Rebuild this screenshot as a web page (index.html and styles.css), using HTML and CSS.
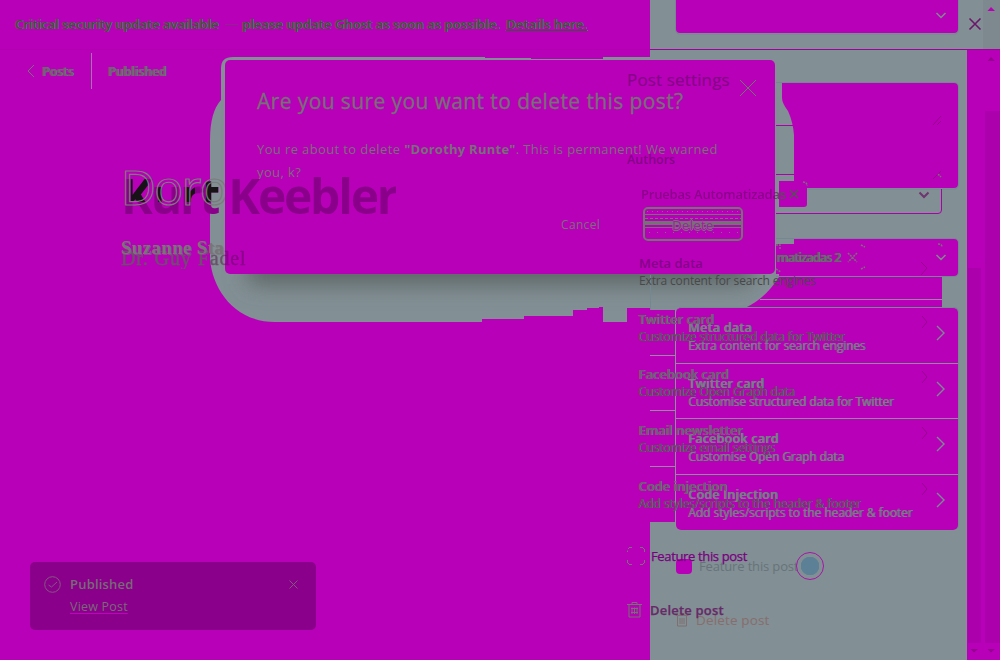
FILE: index.html
```html
<!DOCTYPE html>
<html lang="en">
<head>
<meta charset="utf-8">
<title>Post editor comparison</title>
<link rel="stylesheet" href="styles.css">
</head>
<body>
<main class="stage">
  <svg class="backdrop" viewBox="0 0 1000 660" aria-hidden="true">
    <defs>
      <clipPath id="halo"><path d="M221 68Q221 57 233 57H485V58H531V59H603V57H790V110Q794 120 794 150V240Q790 285 745 308H675V310H650V308H627V322H603V307H599V308H587V310H573V316H524V319H482V322H275C232 322 210 285 210 255V140Q210 112 221 100Z"/></clipPath>
      <filter id="soft" x="-20%" y="-20%" width="140%" height="140%"><feGaussianBlur stdDeviation="11"/></filter>
    </defs>
    <path class="faint" d="M0 49.500H650"/>
    <path class="gray" d="M650 0H1000V50H967V660H650Z"/>
    <path class="groove" d="M983 0H1000V49H983Z"/>
    <g clip-path="url(#halo)">
      <path class="gray" d="M200 50H800V330H200Z"/>
      <rect class="shadow" x="248" y="96" width="504" height="188" filter="url(#soft)"/>
    </g>
    <path class="line-dark" d="M650 49.500H1000"/>
    <path class="edge" d="M675.500 0V29Q675.500 34 680 34H954Q958.500 34 958.500 29V0M776 82.500H954Q958.500 82.500 958.500 87V184Q958.500 189 954 189H807M776 238.500H954Q958.500 238.500 958.500 243V272Q958.500 276.500 954 276.500H776M650.500 275V310"/>
    <path class="mag" d="M676 0H958V29Q958 33 954 33H680Q676 33 676 29Z"/>
    <path class="mag" d="M782 83H954Q958 83 958 87V184Q958 188 954 188H807V204Q807 207 804 207H779V181H794V135Q793 122 788 111Q782 103 782 98Z"/>
    <path class="mag" d="M794 239H954Q958 239 958 243V272Q958 276 954 276H779V274H776V244H794Z"/>
    <path class="mag" d="M779 277H942V308H745Q765 299 779 277Z"/>
    <path class="mag" d="M650 310H675V522H650Z"/>
    <path class="hair" d="M760 299.500H942M650 355.500H675M650 410.500H675M650 466.500H675"/>
    <path class="outline" d="M776 125.500H793M776 174.500H794M776 213.500H938Q941.500 213.500 941.500 210V189"/>
    <path class="mag" d="M967 50H1000V660H967Z"/>
    <path class="thumb" d="M985 111H1000V643H985ZM968 268H981V643H968Z"/>
    <path class="mag" d="M987.500 11 991 7 995 11Z"/>
    <path class="deep" d="M987.500 61 991 57 995 61ZM970.500 649H978L974 652.500ZM987.500 649H995L991 652.500Z"/>
    <path class="stroke" d="M936.500 13 941 17.500 945.500 13M936.500 255 941 259.500 945.500 255"/>
    <path class="stroke dark" d="M919.500 192.500 924 197 928.500 192.500"/>
    <path class="stroke purple" d="M969.500 18.500 980.500 29.500M980.500 18.500 969.500 29.500"/>
    <path class="stroke small" d="M790 190 798 198M798 190 790 198"/>
    <path class="stroke dots" d="M848 253 857 262M857 253 848 262"/>
    <path class="trace" d="M933 125 941 116M937 125 941 121M933 179 941 171"/>
    <path class="trace" d="M921 262 927 268 921 275"/>
    <path class="stroke dots" d="M803 182Q807 182 807 186M938 174 941 177M938 244Q942 244 942 247M861 245 865 247M861 269 865 267M776 245H780V249M776 269 781 272"/>
  </svg>

  <section class="layer chrome">
    <div class="notice"><span class="double w1">Critical security update available</span><i class="dash"></i><span class="double w2">please update Ghost as soon as possible.</span><a class="double w3">Details here.</a></div>
    <nav class="crumbs">
      <svg width="9" height="14" viewBox="0 0 9 14"><path d="M8 1 2 7 8 13"/></svg>
      <span class="double posts">Posts</span><i class="rule"></i><span class="double pub">Published</span>
    </nav>
  </section>

  <section class="layer card-layer">
    <div class="card">
      <div class="row"><div><b class="ghost">Meta data</b><p class="ghost">Extra content for search engines</p></div><svg viewBox="0 0 9 16"><path d="M1 1 8 8 1 15"/></svg></div>
      <div class="row"><div><b class="ghost">Twitter card</b><p class="ghost">Customise structured data for Twitter</p></div><svg viewBox="0 0 9 16"><path d="M1 1 8 8 1 15"/></svg></div>
      <div class="row"><div><b class="ghost">Facebook card</b><p class="ghost">Customise Open Graph data</p></div><svg viewBox="0 0 9 16"><path d="M1 1 8 8 1 15"/></svg></div>
      <div class="row"><div><b class="ghost">Code Injection</b><p class="ghost">Add styles/scripts to the header &amp; footer</p></div><svg viewBox="0 0 9 16"><path d="M1 1 8 8 1 15"/></svg></div>
    </div>
    <div class="feature"><i class="box"></i><span>Feature this post</span><i class="knob"></i></div>
    <div class="remove"><svg width="12" height="14" viewBox="0 0 12 14"><path d="M0 2.500H12M4 2V.5H8V2M1.500 3V13H10.500V3M4 5V11M6 5V11M8 5V11"/></svg><span>Delete post</span></div>
  </section>

  <div class="layer author-two"><span class="double">matizadas 2</span></div>

  <section class="layer modal-layer">
    <div class="modal">
      <h2>Are you sure you want to delete this post?</h2>
      <p>You re about to delete <b>"Dorothy Runte"</b>. This is permanent! We warned<br>you, k?</p>
      <div class="actions"><span class="cancel">Cancel</span><span class="delete"><span>Delete</span></span></div>
      <svg class="close" viewBox="0 0 18 18"><path d="M1 1 17 17M17 1 1 17"/></svg>
    </div>
  </section>

  <section class="layer title-layer">
    <div class="titles"><span class="kurt">Kurt Keebler</span></div>
    <div class="byline"><span class="guy">Dr. Guy Fadel</span></div>
  </section>
  <section class="layer title-layer left-only">
    <div class="outlined">Doro</div>
    <div class="suzanne">Suzanne Sta</div>
  </section>

  <section class="layer settings">
    <h3>Post settings</h3>
    <div class="label">Authors</div>
    <div class="token"><span>Pruebas Automatizadas</span></div>
    <div class="item first"><b>Meta data</b><p>Extra content for search engines</p></div>
    <div class="item"><b class="double">Twitter card</b><p class="double s1">Customize structured data for Twitter</p><svg viewBox="0 0 7 14"><path d="M1 1 6 7 1 13"/></svg></div>
    <div class="item"><b class="double">Facebook card</b><p class="double s2">Customize Open Graph data</p><svg viewBox="0 0 7 14"><path d="M1 1 6 7 1 13"/></svg></div>
    <div class="item"><b class="double">Email newsletter</b><p class="double s3">Customize email settings</p><svg viewBox="0 0 7 14"><path d="M1 1 6 7 1 13"/></svg></div>
    <div class="item"><b class="double">Code injection</b><p class="double s4">Add styles/scripts to the header &amp; footer</p><svg viewBox="0 0 7 14"><path d="M1 1 6 7 1 13"/></svg></div>
    <div class="option"><svg width="18" height="18" viewBox="0 0 18 18"><path d="M.5 5V3.500M2 .5H5M13 .5H16M17.500 2V5M17.500 13V16M16 17.500H13M5 17.500H2M.5 16V13M1 2 2 1M16 1 17 2M17 16 16 17M2 17 1 16"/></svg><span class="feat">Feature this post</span></div>
    <div class="option del"><svg width="15" height="16" viewBox="0 0 15 16"><path d="M0 2.500H15M5 2V.5H10V2M2 3V15H13V3M5 5.500V12M7.500 5.500V12M10 5.500V12M4 6.500H11M4 10.500H11"/></svg><span>Delete post</span></div>
  </section>

  <section class="layer toast-layer">
    <div class="toast">
      <svg width="17" height="17" viewBox="0 0 17 17"><circle cx="8.500" cy="8.500" r="7.800"/><path d="M4.500 9 7.500 11 13 6"/></svg>
      <div><div class="state">Published</div><a class="view">View Post</a></div>
      <svg width="9" height="9" viewBox="0 0 9 9"><path d="M.5.5 8.500 8.500M8.500.5.5 8.500"/></svg>
    </div>
  </section>
</main>
</body>
</html>
```
FILE: styles.css
```css
* { box-sizing: border-box; }
body { margin: 0; }
h2, h3, p { margin: 0; font-weight: 400; }
.stage { position: relative; width: 1000px; height: 660px; overflow: hidden; background: #b900b9; font-family: "Open Sans", "Noto Sans", sans-serif; }
.backdrop, .layer { position: absolute; inset: 0; width: 1000px; height: 660px; }
.layer { white-space: nowrap; }
svg { display: block; flex: none; fill: none; stroke: #737373; }
.backdrop { stroke: none; }
.gray { fill: #828f94; }
.groove { fill: #7d898e; }
.shadow { fill: #5b6565; }
.mag { fill: #b900b9; }
.thumb { fill: #ac00ac; }
.deep { fill: #94008f; }
.line-dark { stroke: #a0009e; stroke-width: 1; }
.faint { stroke: #b100b1; }
.edge { stroke: #748891; }
.hair { stroke: #a083a8; }
.outline { stroke: #ab00aa; }
.stroke { stroke: #7d8b8d; stroke-width: 1.5; }
.stroke.dark { stroke: #6f356f; stroke-width: 2; }
.stroke.purple { stroke: #6b186b; stroke-width: 1.6; }
.stroke.small { stroke: #56505a; }
.stroke.dots { stroke: #737373; stroke-dasharray: 2 1; }
.trace { stroke: #98008e; }
.double { color: #6d656f; text-shadow: 1px 0 0 #77757a, 0 0 1px #4c4c4c; }

.chrome { padding: 14px 15px; }
.notice { display: flex; align-items: center; height: 20px; font-size: 13px; font-weight: 600; }
.notice .double { color: #484848; text-shadow: 1px 0 0 #737373, -1px 0 0 #73607380; }
.w1 { width: 205px; letter-spacing: -.03px; }
.dash { width: 13px; height: 1px; margin: 0 4px 0 5px; background: #8c258c; }
.w2 { width: 264px; letter-spacing: .05px; }
.w3 { letter-spacing: .15px; text-decoration: underline; }
.crumbs { display: flex; align-items: center; height: 36px; margin: 19px 0 0 11px; font-size: 12px; font-weight: 600; }
.posts { width: 33px; margin-left: 7px; letter-spacing: .1px; }
.rule { width: 1px; height: 36px; margin: 0 16px; background: #a077ab; }
.crumbs .double { text-shadow: 1px 0 #77757a, -1px 0 #73607380; }
.crumbs .pub { letter-spacing: .15px; }

.card-layer { padding: 307px 42px 0 676px; }
.card { height: 223px; border: solid #748b91; border-width: 1px 0 0 0; border-radius: 5px; background: #b900b9; box-shadow: -1px 0 #899298, 1px 0 #748b91; }
.row { display: flex; justify-content: space-between; height: 55.7px; padding: 11px 13px 0 12px; border-bottom: 1px solid #91899c; }
.row:last-child { border: 0; }
.row b, .row p { display: block; line-height: 18px; font-size: 12.5px; }
.row b { font-weight: 600; letter-spacing: .25px; }
.row p { font-size: 12px; letter-spacing: -.12px; }
.row:last-child p { letter-spacing: -.05px; }
.row svg { width: 9px; height: 16px; margin-top: 6px; stroke: #788b92; stroke-width: 1.4; }
.ghost { color: #788087; text-shadow: 1px 0 0 #6f7680; }
.feature { display: flex; align-items: center; height: 30px; margin-top: 21px; font-size: 13px; color: #66747a; }
.box { width: 16px; height: 15px; border-radius: 4px; background: #b900b9; }
.feature span { width: 97px; margin-left: 7px; letter-spacing: -.15px; }
.knob { width: 28px; height: 28px; border: 1px solid #a615a8; border-radius: 50%; background: radial-gradient(circle, #5c8196 0 9px, #828f94 9.5px); }
.remove { display: flex; align-items: center; gap: 8px; height: 20px; margin-top: 29px; color: #886d6c; font-size: 13.5px; letter-spacing: .15px; }
.remove svg { stroke: #806f70; }

.author-two { padding: 248px 0 0 776px; font-size: 12.5px; line-height: 20px; font-weight: 600; letter-spacing: -.75px; }

.modal-layer { padding: 60px 225px; }
.modal { position: relative; height: 214px; padding: 27px 32px 0; border-radius: 5px; background: #b900b9; color: #777078; }
.modal h2 { height: 28px; font-size: 21px; line-height: 28px; letter-spacing: .4px; -webkit-text-stroke: .3px #737373; }
.modal p { margin-top: 23px; font-size: 13px; line-height: 23px; letter-spacing: .38px; }
.modal b { font-weight: 700; letter-spacing: .25px; }
.actions { display: flex; align-items: center; justify-content: flex-end; gap: 43px; margin-top: 23px; }
.cancel { font-size: 12px; letter-spacing: .3px; }
.delete { width: 100px; height: 34px; border: 2px solid #737373; border-radius: 5px; padding-top: 8px; line-height: 17px; text-align: center; font-size: 13px; color: #b900b9; background: linear-gradient(#737373, #737373) 0 5px / 100% 1px no-repeat, repeating-linear-gradient(90deg, #737373 0 3px, transparent 3px 5px) 0 9px / 100% 1px no-repeat, linear-gradient(#737373, #737373) 0 12px / 100% 4px no-repeat, linear-gradient(#737373, #737373) 0 18px / 100% 1px no-repeat, repeating-linear-gradient(90deg, transparent 0 2px, #737373 2px 3px, transparent 3px 5px) 0 2px / 100% 1px no-repeat, repeating-linear-gradient(90deg, transparent 0 4px, #737373 4px 5px, transparent 5px 8px) 0 23px / 100% 1px no-repeat; }
.delete span { display: inline-block; color: #ae16ae; text-shadow: -1px 0 #737373, 1px 0 #737373, 0 1px #737373, 0 -1px #737373; letter-spacing: .4px; }
.close { position: absolute; top: 19px; right: 18px; width: 18px; height: 18px; }

.title-layer { padding: 165px 0 0 121px; }
.titles { height: 62px; font-size: 48px; line-height: 62px; font-weight: 700; letter-spacing: -2.25px; }
.kurt, .guy { color: transparent; -webkit-background-clip: text; background-clip: text; }
.kurt { background-image: linear-gradient(90deg, transparent 10px, #161216 10px 27px, transparent 27px 37px, #161216 37px 48px, transparent 48px 65px, #161216 65px 74px, transparent 74px 85px, #161216 85px 97px, transparent 97px), linear-gradient(#8b008b, #8b008b); background-size: 100% 39px, 100% 100%; background-repeat: no-repeat; }
.byline { height: 28px; margin-top: 17px; font: 20px/28px "Liberation Serif", serif; }
.guy { background-image: linear-gradient(90deg, #6a506a 104px, #8b008b 104px); letter-spacing: .9px; -webkit-text-stroke: .4px transparent; }
.left-only { clip-path: inset(0 775px 0 0); padding-top: 156px; }
.outlined { height: 62px; font-size: 48px; line-height: 62px; letter-spacing: -1.5px; color: transparent; -webkit-text-stroke: 1.2px #7b7b7b; }
.suzanne { height: 28px; margin-top: 16px; font: bold 19px/28px "Liberation Serif", serif; color: #79747a; letter-spacing: .3px; text-shadow: 1px 1px #73737399; }

.settings { padding: 68px 58px 0 627px; color: #840087; }
.settings h3 { height: 24px; font-size: 17px; line-height: 24px; letter-spacing: .15px; -webkit-text-stroke: .2px #8b008b; }
.label { height: 20px; margin-top: 58px; font-size: 12.5px; line-height: 20px; font-weight: 600; }
.token { height: 20px; margin: 14px 0 0 14px; font-size: 13px; line-height: 20px; font-weight: 600; letter-spacing: -.2px; }
.token span { color: transparent; background: linear-gradient(90deg, #8b008b 134px, #535153 134px); -webkit-background-clip: text; background-clip: text; }
.item { position: relative; height: 55.7px; padding-left: 11px; }
.item b, .item p { display: block; line-height: 18px; font-size: 13px; font-weight: 600; }
.item p { font-size: 12px; font-weight: 400; letter-spacing: -.2px; }
.item.first { margin-top: 50px; padding-left: 12px; }
.item.first p { color: #484848; letter-spacing: -.15px; }
.item b.double { letter-spacing: -.05px; color: #715a75; text-shadow: 1px 0 #77757a; }
.item p.double { color: #56505a; letter-spacing: -.1px; text-shadow: 1px 0 #737373; }
.item svg { position: absolute; left: 294px; top: 5px; width: 7px; height: 14px; stroke: #98008e; }
.option { display: flex; align-items: center; gap: 6px; height: 20px; margin-top: 14px; font-size: 13px; -webkit-text-stroke: .25px currentColor; }
.option svg { stroke: #737373; }
.feat { letter-spacing: -.35px; color: #790080; }
.del { gap: 8px; margin-top: 34px; font-weight: 600; letter-spacing: .2px; color: #672967; }

.toast-layer { padding: 562px 0 0 30px; }
.toast { display: flex; width: 286px; height: 68px; padding: 13px 18px 0 14px; border-radius: 5px; background: #8b008b; box-shadow: 0 3px 14px #ad00ad33; }
.toast > svg { margin-top: 1px; stroke: #80597f; }
.toast > svg:last-child { margin: 5px 0 0 auto; }
.toast > div { margin-left: 9px; }
.state, .view { display: block; color: #776b77; font-size: 13px; line-height: 18px; letter-spacing: .2px; }
.state { font-weight: 600; }
.view { margin-top: 5px; font-size: 12.5px; text-decoration: underline; text-decoration-color: #c100c1; text-underline-offset: 2px; }
```
